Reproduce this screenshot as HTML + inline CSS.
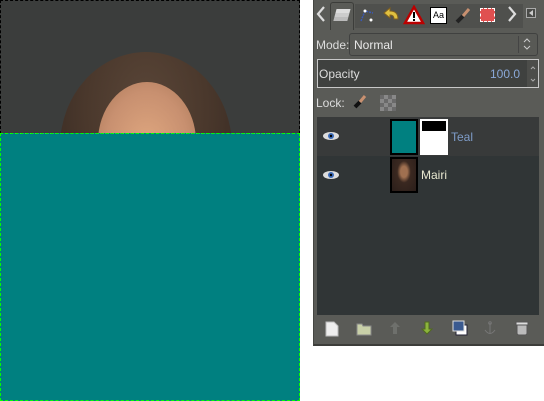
<!DOCTYPE html>
<html><head><meta charset="utf-8"><style>
*{margin:0;padding:0;box-sizing:border-box}
body{width:544px;height:401px;background:#fff;position:relative;overflow:hidden;font-family:"Liberation Sans",sans-serif;font-size:12px}
.a{position:absolute}
</style></head><body>
<!-- canvas -->
<div class="a" style="left:0;top:0;width:300px;height:133px;background:#3b3d3c;overflow:hidden">
  <div class="a" style="left:60px;top:52px;width:172px;height:190px;border-radius:50% 50% 40% 40%;background:radial-gradient(ellipse at 50% 30%,#5a4638 0%,#4a382c 50%,#3a2c24 85%)"></div>
  <div class="a" style="left:98px;top:82px;width:98px;height:120px;border-radius:50% 50% 40% 40%;background:radial-gradient(ellipse at 50% 55%,#e0a880 0%,#c89070 60%,#a87656 100%)"></div>
</div>
<div class="a" style="left:0;top:133px;width:300px;height:268px;background:#008080"></div>
<div class="a" style="left:0;top:0;width:300px;height:134px;border:1px dashed #000;border-bottom-color:#fff"></div>
<div class="a" style="left:0;top:133px;width:300px;height:268px;border:1px dashed #00ff00"></div>
<!-- panel -->
<div class="a" style="left:313px;top:0;width:231px;height:346px;background:#5a5b57;border-bottom:2px solid #3c3d3a;border-left:1px solid #454642"></div>
<!-- tabs -->
<svg class="a" style="left:315px;top:5px" width="12" height="18"><path d="M9 2 L3 9 L9 16" stroke="#ddd" stroke-width="2.2" fill="none"/></svg>
<div class="a" style="left:330px;top:2px;width:24px;height:28px;background:#5a5b57;border:1px solid #3c3d3a;border-bottom:none;border-radius:3px 3px 0 0"></div>
<div class="a" style="left:336px;top:9px;width:14px;height:4px;background:#ddd;box-shadow:0 4px 0 #ccc,0 8px 0 #bbb;transform:skewX(-15deg)"></div>
<div class="a" style="left:355px;top:4px;width:168px;height:24px;background:#4f504d"></div>
<svg class="a" style="left:357px;top:5px" width="22" height="20"><path d="M4 16 L8 6 L16 8" stroke="#3a5ab8" fill="none" stroke-width="1.5" stroke-dasharray="2 1"/><circle cx="8" cy="6" r="1.5" fill="#fff"/><circle cx="14" cy="15" r="1.5" fill="#fff"/></svg>
<svg class="a" style="left:380px;top:5px" width="22" height="20"><path d="M4 8 L10 3 L10 6 Q18 6 18 14 L14 14 Q14 10 10 10 L10 13 Z" fill="#e0c040" stroke="#806020"/></svg>
<svg class="a" style="left:403px;top:5px" width="22" height="20"><path d="M11 2 L20 18 L2 18 Z" fill="#fff" stroke="#b00" stroke-width="2.5"/><rect x="10" y="7" width="2" height="6" fill="#000"/><rect x="10" y="14" width="2" height="2" fill="#000"/></svg>
<div class="a" style="left:430px;top:7px;width:17px;height:17px;background:#fff;border:1px solid #000;font-size:9px;color:#000;text-align:center;line-height:15px">Aa</div>
<svg class="a" style="left:453px;top:5px" width="22" height="20"><path d="M4 17 L10 11" stroke="#222" stroke-width="4"/><path d="M10 11 L16 4" stroke="#c89070" stroke-width="3"/></svg>
<div class="a" style="left:480px;top:8px;width:15px;height:14px;background:#e05050;border:1px dashed #fff"></div>
<svg class="a" style="left:506px;top:5px" width="12" height="18"><path d="M3 2 L9 9 L3 16" stroke="#ddd" stroke-width="2.2" fill="none"/></svg>
<div class="a" style="left:526px;top:8px;width:10px;height:10px;border:1px solid #aaa;background:#4a4b48"></div>
<div class="a" style="left:529px;top:10px;width:0;height:0;border-right:4px solid #ccc;border-top:3px solid transparent;border-bottom:3px solid transparent"></div>
<!-- mode -->
<div class="a" style="left:316px;top:38px;color:#ddd">Mode:</div>
<div class="a" style="left:349px;top:33px;width:189px;height:23px;background:#585955;border:1px solid #404140;border-radius:3px"></div>
<div class="a" style="left:354px;top:38px;color:#e8e8e8">Normal</div>
<div class="a" style="left:518px;top:36px;width:1px;height:17px;background:#444"></div>
<svg class="a" style="left:522px;top:37px" width="10" height="14"><path d="M2 5 L5 2 L8 5 M2 9 L5 12 L8 9" stroke="#ccc" fill="none"/></svg>
<!-- opacity -->
<div class="a" style="left:317px;top:59px;width:222px;height:29px;background:#3f413f;border:1px solid #c8c8c8"></div>
<div class="a" style="left:319px;top:67px;color:#ddd">Opacity</div>
<div class="a" style="left:490px;top:67px;color:#8aa8d8">100.0</div>
<div class="a" style="left:527px;top:60px;width:11px;height:27px;background:#4c4d4a"></div>
<svg class="a" style="left:528px;top:62px" width="10" height="24"><path d="M3 7 L5 5 L7 7 M3 17 L5 19 L7 17" stroke="#aaa" fill="none"/></svg>
<!-- lock -->
<div class="a" style="left:316px;top:96px;color:#ddd">Lock:</div>
<svg class="a" style="left:352px;top:93px" width="16" height="16"><path d="M3 14 L8 9" stroke="#111" stroke-width="4"/><path d="M8 9 L13 3" stroke="#c89070" stroke-width="3"/></svg>
<div class="a" style="left:380px;top:95px;width:16px;height:16px;background:repeating-conic-gradient(#888 0 25%,#6a6a6a 0 50%) 0 0/8px 8px"></div>
<!-- list -->
<div class="a" style="left:317px;top:117px;width:222px;height:198px;background:#303536"></div>
<div class="a" style="left:317px;top:117px;width:222px;height:39px;background:#383a3a"></div>
<div class="a" style="left:390px;top:119px;width:28px;height:36px;background:#008080;border:2px solid #000"></div>
<div class="a" style="left:420px;top:119px;width:28px;height:36px;background:#fff"></div>
<div class="a" style="left:422px;top:121px;width:24px;height:10px;background:#000"></div>
<div class="a" style="left:451px;top:130px;color:#7e9cc8">Teal</div>
<div class="a" style="left:390px;top:157px;width:28px;height:36px;background:radial-gradient(ellipse at 50% 40%,#a07050 0 20%,#3a2820 40%,#2a1e1a 100%);border:2px solid #000"></div>
<div class="a" style="left:421px;top:168px;color:#e8e8d0">Mairi</div>
<svg class="a" style="left:321px;top:130px" width="20" height="12"><ellipse cx="10" cy="6" rx="8" ry="4" fill="#ddd"/><circle cx="10" cy="6" r="3" fill="#3a6ab8"/><circle cx="10" cy="6" r="1.2" fill="#000"/></svg>
<svg class="a" style="left:321px;top:169px" width="20" height="12"><ellipse cx="10" cy="6" rx="8" ry="4" fill="#ddd"/><circle cx="10" cy="6" r="3" fill="#3a6ab8"/><circle cx="10" cy="6" r="1.2" fill="#000"/></svg>
<!-- bottom buttons -->
<svg class="a" style="left:325px;top:321px" width="14" height="16"><path d="M1 1 H9 L13 5 V15 H1 Z" fill="#eee" stroke="#bbb"/></svg>
<svg class="a" style="left:356px;top:322px" width="16" height="14"><path d="M1 2 H6 L7 4 H15 V13 H1 Z" fill="#c8d0a8" stroke="#888"/></svg>
<svg class="a" style="left:389px;top:321px" width="12" height="14"><path d="M6 1 L11 6 H8 V13 H4 V6 H1 Z" fill="#6e706c"/></svg>
<svg class="a" style="left:421px;top:321px" width="12" height="14"><path d="M6 13 L11 8 H8 V1 H4 V8 H1 Z" fill="#8cb43c" stroke="#506a20"/></svg>
<svg class="a" style="left:452px;top:320px" width="16" height="16"><rect x="4" y="5" width="11" height="10" fill="#fff" stroke="#223"/><rect x="1" y="1" width="11" height="10" fill="#3a5a90" stroke="#ddd"/></svg>
<svg class="a" style="left:483px;top:321px" width="14" height="15"><path d="M7 2 V13 M2 9 Q7 16 12 9" stroke="#777" fill="none"/><circle cx="7" cy="2" r="1.3" fill="none" stroke="#777"/></svg>
<svg class="a" style="left:515px;top:320px" width="14" height="16"><rect x="2" y="3" width="10" height="12" rx="2" fill="#bbb" stroke="#555"/><rect x="1" y="2" width="12" height="3" fill="#ddd" stroke="#555"/></svg>
</body></html>
